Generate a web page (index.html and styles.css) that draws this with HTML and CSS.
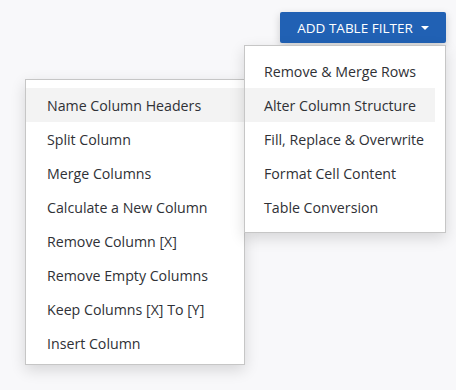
FILE: index.html
```html
<!DOCTYPE html>
<html lang="en">
<head>
    <meta charset="UTF-8">
    <meta name="viewport" content="width=device-width, initial-scale=1.0">
    <title>Table Filters</title>
    <link rel="stylesheet" href="styles.css">
</head>
<body>
    <!-- Barra superior con el botón -->
    <div class="toolbar">
        <button class="filter-btn" type="button">Add Table Filter<span class="caret"></span></button>
    </div>

    <!-- Menú principal -->
    <ul class="menu menu-main">
        <li>Remove &amp; Merge Rows</li>
        <li class="active">Alter Column Structure</li>
        <li>Fill, Replace &amp; Overwrite</li>
        <li>Format Cell Content</li>
        <li>Table Conversion</li>
    </ul>

    <!-- Submenú de columnas -->
    <ul class="menu menu-sub">
        <li class="active">Name Column Headers</li>
        <li>Split Column</li>
        <li>Merge Columns</li>
        <li>Calculate a New Column</li>
        <li>Remove Column [X]</li>
        <li>Remove Empty Columns</li>
        <li>Keep Columns [X] To [Y]</li>
        <li>Insert Column</li>
    </ul>
</body>
</html>
```

FILE: styles.css
```css
body {
    margin: 0;
    background-color: #f8f8fa;
    font-family: 'Open Sans', 'Noto Sans', sans-serif;
    height: 390px;
    position: relative;
}
.toolbar {
    display: flex;
    justify-content: flex-end;
    padding: 12px 10px 0 0;
}
.filter-btn {
    height: 31px;
    width: 166px;
    padding: 0;
    background-color: #2161b4;
    color: #fff;
    border: none;
    border-radius: 2px;
    font-family: 'Open Sans', 'Noto Sans', sans-serif;
    font-size: 13.5px;
    text-transform: uppercase;
    box-shadow: 0 3px 8px rgba(0, 0, 0, 0.18);
    display: flex;
    align-items: center;
    justify-content: center;
}
.caret {
    display: inline-block;
    width: 0;
    height: 0;
    margin-left: 8px;
    border-left: 4px solid transparent;
    border-right: 4px solid transparent;
    border-top: 4px solid #fff;
}
.menu {
    position: absolute;
    margin: 0;
    list-style: none;
    background-color: #fff;
    border: 1px solid #c6c6c6;
    box-shadow: 0 5px 14px rgba(0, 0, 0, 0.14);
    box-sizing: border-box;
    font-size: 14.2px;
    color: #2f3136;
}
.menu li {
    height: 34px;
    line-height: 36px;
    padding-left: 19px;
    white-space: nowrap;
}
.menu li.active {
    background-color: #f3f3f3;
}
.menu-main {
    left: 244px;
    top: 45px;
    width: 202px;
    padding: 8px 10px 8px 0;
    z-index: 2;
}
.menu-sub {
    left: 25px;
    top: 79px;
    width: 220px;
    padding: 8px 0 4px 0;
    z-index: 1;
}
.menu-sub li {
    padding-left: 21px;
}
```
